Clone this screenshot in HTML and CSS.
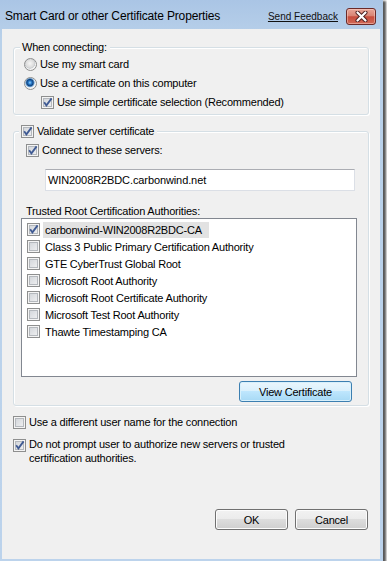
FILE: index.html
```html
<!DOCTYPE html>
<html lang="en">
<head>
  <meta charset="UTF-8">
  <title>Smart Card or other Certificate Properties</title>
  <link rel="stylesheet" href="styles.css">
</head>
<body>
  <div class="window">
    <div class="titlebar">
      <span class="title">Smart Card or other Certificate Properties</span>
      <a class="feedback">Send Feedback</a>
      <div class="close">
        <svg width="15" height="11" viewBox="0 0 15 11">
          <path d="M3.5 1.5 L11.5 9.5 M11.5 1.5 L3.5 9.5" stroke="#4a1e1e" stroke-width="4" stroke-linecap="round"/>
          <path d="M3.5 1.5 L11.5 9.5 M11.5 1.5 L3.5 9.5" stroke="#fff" stroke-width="2.2" stroke-linecap="round"/>
        </svg>
      </div>
    </div>

    <div class="client">
      <fieldset class="group group-connect">
        <legend>When connecting:</legend>
        <div class="group-body">
          <div class="row"><span class="radio"></span><span class="lbl">Use my smart card</span></div>
          <div class="row"><span class="radio checked"></span><span class="lbl">Use a certificate on this computer</span></div>
          <div class="row sub"><span class="cb checked"><svg width="11" height="11" viewBox="0 0 11 11"><path d="M2.2 5.2 L4.4 8.4 L9.6 1.4" fill="none" stroke="#3f5a93" stroke-width="1.8"/></svg></span><span class="lbl">Use simple certificate selection (Recommended)</span></div>
        </div>
      </fieldset>

      <fieldset class="group group-validate">
        <legend><span class="cb checked"><svg width="11" height="11" viewBox="0 0 11 11"><path d="M2.2 5.2 L4.4 8.4 L9.6 1.4" fill="none" stroke="#3f5a93" stroke-width="1.8"/></svg></span><span class="lbl">Validate server certificate</span></legend>
        <div class="group-body">
          <div class="row row-servers"><span class="cb checked"><svg width="11" height="11" viewBox="0 0 11 11"><path d="M2.2 5.2 L4.4 8.4 L9.6 1.4" fill="none" stroke="#3f5a93" stroke-width="1.8"/></svg></span><span class="lbl">Connect to these servers:</span></div>
          <div class="textbox">WIN2008R2BDC.carbonwind.net</div>
          <div class="list-label">Trusted Root Certification Authorities:</div>
          <div class="listbox">
            <div class="item"><span class="cb checked"><svg width="11" height="11" viewBox="0 0 11 11"><path d="M2.2 5.2 L4.4 8.4 L9.6 1.4" fill="none" stroke="#3f5a93" stroke-width="1.8"/></svg></span><span class="item-text selected">carbonwind-WIN2008R2BDC-CA</span></div>
            <div class="item"><span class="cb"></span><span class="item-text">Class 3 Public Primary Certification Authority</span></div>
            <div class="item"><span class="cb"></span><span class="item-text">GTE CyberTrust Global Root</span></div>
            <div class="item"><span class="cb"></span><span class="item-text">Microsoft Root Authority</span></div>
            <div class="item"><span class="cb"></span><span class="item-text">Microsoft Root Certificate Authority</span></div>
            <div class="item"><span class="cb"></span><span class="item-text">Microsoft Test Root Authority</span></div>
            <div class="item"><span class="cb"></span><span class="item-text">Thawte Timestamping CA</span></div>
          </div>
          <div class="view-row">
            <button class="btn btn-default view-btn">View Certificate</button>
          </div>
        </div>
      </fieldset>

      <div class="row row-user"><span class="cb"></span><span class="lbl">Use a different user name for the connection</span></div>
      <div class="row row-prompt"><span class="cb checked"><svg width="11" height="11" viewBox="0 0 11 11"><path d="M2.2 5.2 L4.4 8.4 L9.6 1.4" fill="none" stroke="#3f5a93" stroke-width="1.8"/></svg></span><span class="lbl">Do not prompt user to authorize new servers or trusted<br>certification authorities.</span></div>

      <div class="actions">
        <button class="btn">OK</button>
        <button class="btn">Cancel</button>
      </div>
    </div>
  </div>
</body>
</html>
```

FILE: styles.css
```css
body {
  margin: 0;
  background: #fff;
  font-family: "Liberation Sans", Arial, sans-serif;
  font-size: 11px;
  letter-spacing: -0.2px;
  color: #000;
}

.window {
  width: 383px;
  height: 561px;
  display: flex;
  flex-direction: column;
  background: linear-gradient(#aac5e5, #b9d1ea 40px, #bcd3ec);
  box-shadow: 2px 2px 2px 1px rgba(0, 0, 0, 0.65);
}

.titlebar {
  height: 29px;
  display: flex;
  align-items: flex-start;
  padding-left: 5px;
  box-sizing: border-box;
}

.title {
  font-size: 12px;
  letter-spacing: -0.15px;
  line-height: 16px;
  margin-top: 8px;
  flex: 1;
}

.feedback {
  font-size: 10px;
  letter-spacing: 0;
  line-height: 14px;
  margin-top: 10px;
  text-decoration: underline;
  color: #111;
}

.close {
  width: 30px;
  height: 17px;
  margin: 8px 7px 0 8px;
  border: 1px solid #6b2a28;
  border-radius: 3px;
  box-sizing: border-box;
  background: linear-gradient(#e8a698 0%, #d98474 45%, #c74c3c 52%, #d06a58 100%);
  box-shadow: inset 0 0 0 1px rgba(255, 220, 210, 0.45);
  display: flex;
  align-items: center;
  justify-content: center;
}

.client {
  flex: 1;
  margin: 0 3px 2px 2px;
  background: #f0f0f0;
  display: flex;
  flex-direction: column;
  padding: 12px 11px 29px 11px;
}

/* group boxes */
.group {
  margin: 0;
  padding: 0;
  border: 1px solid #d5dfe5;
  border-radius: 3px;
  box-shadow: inset 1px 1px 0 #fff, 1px 1px 0 #fff;
  min-width: 0;
}

.group legend {
  padding: 0 3px 0 2px;
  background: #f0f0f0;
  line-height: 13px;
  display: flex;
  align-items: center;
}

.group-connect legend {
  margin-left: 6px;
}

.group-connect .group-body {
  padding: 1px 0 2px 10px;
}

.group-connect .row {
  height: 19px;
}

.group-validate {
  margin-top: 10px;
}

.group-validate legend {
  margin-left: 5px;
}

.group-validate .group-body {
  padding: 4px 0 3px 7px;
}

.row {
  display: flex;
  align-items: center;
}

.lbl {
  margin-left: 3px;
  line-height: 13px;
}

.row.sub {
  margin-left: 17px;
}

.row-servers {
  height: 17px;
  margin-left: 5px;
}

.textbox {
  width: 310px;
  height: 22px;
  box-sizing: border-box;
  margin: 10px 0 0 24px;
  border: 1px solid #dbdfe6;
  border-top-color: #abadb3;
  background: #fff;
  padding: 3px 0 0 2px;
  line-height: 14px;
  letter-spacing: -0.1px;
}

.list-label {
  margin: 14px 0 0 5px;
  line-height: 13px;
}

.listbox {
  width: 336px;
  height: 159px;
  box-sizing: border-box;
  margin-top: 0;
  border: 1px solid #828790;
  background: #fff;
  padding: 2px 0 0 5px;
}

.item {
  height: 17px;
  display: flex;
  align-items: center;
}

.item-text {
  margin-left: 3px;
  padding: 0 2px;
  line-height: 16px;
}

.item-text.selected {
  background: #e2e2e2;
  padding-right: 7px;
}

.view-row {
  display: flex;
  justify-content: flex-end;
  padding-right: 16px;
  margin-top: 4px;
}

.row-user {
  margin-top: 8px;
  height: 17px;
}

.row-prompt {
  margin-top: 6px;
  align-items: flex-start;
}

.row-prompt .cb {
  margin-top: 2px;
}

.row-prompt .lbl {
  line-height: 14px;
}

/* checkbox */
.cb {
  width: 13px;
  height: 13px;
  flex: none;
  box-sizing: border-box;
  border: 1px solid #8e8f8f;
  background: linear-gradient(135deg, #cdd1d6, #f4f4f5);
  box-shadow: inset 0 0 0 1px #f4f4f4, inset 0 0 0 2px #b4b8bd;
  display: flex;
}

.cb svg {
  display: block;
}

/* radio */
.radio {
  width: 13px;
  height: 13px;
  flex: none;
  box-sizing: border-box;
  border: 1px solid #8e8f8f;
  border-radius: 50%;
  background: radial-gradient(circle at 45% 40%, #f6f6f6 0, #dcdcdc 4px, #c8ccd0 5px, #f4f4f4 5.5px);
}

.radio.checked {
  background: radial-gradient(circle at 45% 42%, #9fd4f8 0, #2a7fd0 1.6px, #10427e 3.2px, #6ea3d4 4.2px, #e9eef3 5px, #f4f4f4 5.5px);
}

/* buttons */
.btn {
  font-family: "Liberation Sans", Arial, sans-serif;
  font-size: 11px;
  letter-spacing: -0.2px;
  color: #000;
  height: 21px;
  width: 73px;
  padding: 0;
  border: 1px solid #707070;
  border-radius: 3px;
  background: linear-gradient(#f2f2f2 0%, #ebebeb 50%, #dddddd 50%, #cfcfcf 100%);
  box-shadow: inset 0 0 0 1px #fcfcfc;
}

.btn-default {
  border-color: #3c7fb1;
  background: linear-gradient(#eaf6fd 0%, #d9f0fc 50%, #bee6fd 50%, #a7d9f5 100%);
  box-shadow: inset 0 0 0 1px #d8f0fb;
}

.view-btn {
  width: 113px;
}

.actions {
  margin-top: auto;
  display: flex;
  justify-content: flex-end;
  gap: 7px;
  padding-right: 1px;
}
```
